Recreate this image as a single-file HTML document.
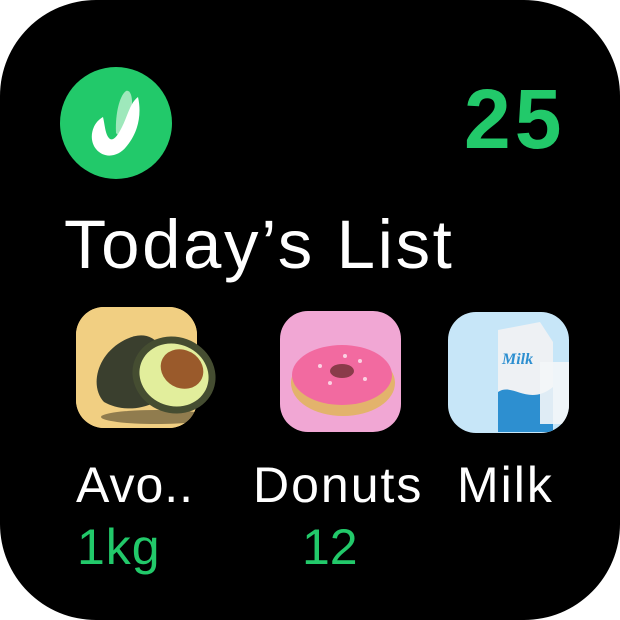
<!DOCTYPE html><html><head><style>
body{margin:0;width:620px;height:620px;background:#fff;overflow:hidden}
.c{position:absolute;left:0;top:0;width:620px;height:620px;background:#000;border-radius:96px}
.t{position:absolute;font-family:"Liberation Sans",sans-serif;white-space:nowrap;line-height:1}
.tile{position:absolute;width:121px;height:121px;border-radius:28px;overflow:hidden}
</style></head><body><div class="c"></div>
<svg style="position:absolute;left:60px;top:67px" width="112" height="112" viewBox="0 0 112 112">
<circle cx="56" cy="56" r="56" fill="#22c96a"/>
<path d="M56 66 C55 46 60 28 66 24 C72 22 74 36 70 52 C66 64 60 72 56 66Z" fill="#9ee8bb"/>
<path d="M43 50 C32 56 28 72 36 82 C44 92 58 90 66 80 C78 66 82 48 78 30 C70 36 68 48 62 60 C58 68 54 74 50 72 C45 68 45 58 43 50Z" fill="#fff"/>
</svg>
<div class="t" style="left:464px;top:77px;font-size:84px;font-weight:bold;color:#22c96a;letter-spacing:4px">25</div>
<div class="t" style="left:64px;top:210px;font-size:69px;color:#fff;letter-spacing:2.6px">Today’s List</div>
<div class="tile" style="left:76px;top:307px;background:#f1cf82;overflow:visible;border-radius:28px">
<div style="position:absolute;inset:0;border-radius:28px;background:#f1cf82"></div>
<svg width="160" height="121" style="position:absolute;left:0;top:0"><ellipse cx="80" cy="110" rx="55" ry="7" fill="#000" opacity=".4"/>
<path d="M28 95 C14 80 20 50 45 35 C60 26 75 25 85 40 L80 95 C60 105 40 102 28 95Z" fill="#3a3f2e"/>
<ellipse cx="98" cy="68" rx="42" ry="38" transform="rotate(20 98 68)" fill="#454d31"/>
<ellipse cx="98" cy="68" rx="35" ry="31" transform="rotate(20 98 68)" fill="#e2ee9c"/>
<ellipse cx="106" cy="62" rx="22" ry="19" transform="rotate(30 106 62)" fill="#9a5a2b"/></svg></div>
<div class="tile" style="left:280px;top:311px;background:#f1a7d4">
<svg width="121" height="121"><ellipse cx="63" cy="72" rx="52" ry="33" fill="#e3b36c"/>
<ellipse cx="62" cy="64" rx="50" ry="30" fill="#f26aa0"/><ellipse cx="62" cy="60" rx="12" ry="7" fill="#8a3b4a"/>
<g fill="#fff" opacity=".7"><circle cx="40" cy="55" r="2"/><circle cx="80" cy="50" r="2"/><circle cx="50" cy="72" r="2"/><circle cx="85" cy="68" r="2"/><circle cx="65" cy="45" r="2"/></g></svg></div>
<div class="tile" style="left:448px;top:312px;background:#c7e6f8">
<svg width="121" height="121"><path d="M50 18 L92 10 L105 30 L105 120 L50 120Z" fill="#eef1f4"/>
<path d="M50 80 C65 70 80 95 105 75 L105 120 L50 120Z" fill="#2d8fd0"/>
<rect x="92" y="50" width="30" height="62" fill="#f3f6f8" opacity=".9"/>
<text x="54" y="52" font-family="Liberation Serif" font-style="italic" font-weight="bold" font-size="16" fill="#2d8fd0">Milk</text></svg></div>
<div class="t" style="left:76px;top:460px;font-size:50px;color:#fff;letter-spacing:1px">Avo..</div>
<div class="t" style="left:253px;top:460px;font-size:50px;color:#fff;letter-spacing:2px">Donuts</div>
<div class="t" style="left:457px;top:460px;font-size:50px;color:#fff;letter-spacing:2px">Milk</div>
<div class="t" style="left:77px;top:522px;font-size:50px;color:#22c96a;letter-spacing:1px">1kg</div>
<div class="t" style="left:302px;top:522px;font-size:50px;color:#22c96a">12</div>
</body></html>
